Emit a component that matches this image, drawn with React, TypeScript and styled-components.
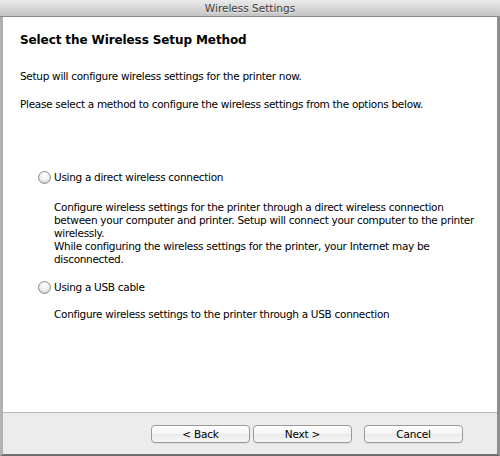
import React from "react";
import styled, { createGlobalStyle } from "styled-components";

const GlobalStyle = createGlobalStyle`
    html, body {
        margin: 0;
        padding: 0;
        background: #ffffff;
    }
    body {
        font-family: "DejaVu Sans", "Liberation Sans", sans-serif;
        -webkit-font-smoothing: antialiased;
    }
`;

const Window = styled.div`
    width: 500px;
    height: 456px;
    box-sizing: border-box;
    display: flex;
    flex-direction: column;
    border-left: 3px solid #b2b2b2;
    border-right: 3px solid #8e8e8e;
    border-bottom: 2px solid #6f6f6f;
    background: #ffffff;
`;

const TitleBar = styled.div`
    height: 16px;
    flex-shrink: 0;
    display: flex;
    align-items: center;
    justify-content: center;
    margin: 0 -3px;
    background: linear-gradient(#ebebeb, #c4c4c4);
    border-bottom: 1px solid #8a8a8a;
    font-size: 10.5px;
    color: #3a3a3a;
    text-shadow: 0 1px 0 rgba(255, 255, 255, 0.6);
`;

const Body = styled.div`
    flex: 1;
    padding: 16px 0 0 17px;
    color: #000000;
    font-size: 10.5px;
    letter-spacing: -0.3px;
    white-space: nowrap;
`;

const Heading = styled.h1`
    margin: 0 0 22px;
    font-size: 12px;
    font-weight: bold;
    letter-spacing: -0.1px;
`;

const Para = styled.p`
    margin: 0 0 14px;
    line-height: 14px;
`;

const Options = styled.div`
    display: flex;
    flex-direction: column;
    gap: 14px;
    margin-top: 59px;
    padding-left: 18px;
`;

const Option = styled.div<{ $spacing: number }>`
    display: flex;
    flex-direction: column;
    gap: ${(p) => p.$spacing}px;
`;

const RadioLabel = styled.label`
    display: flex;
    align-items: center;
    gap: 3px;
    line-height: 14px;
`;

const Radio = styled.span`
    width: 13px;
    height: 13px;
    box-sizing: border-box;
    border-radius: 50%;
    border: 1px solid #8d8d8d;
    background: radial-gradient(circle at 50% 30%, #ffffff 0%, #f1f1f1 45%, #d2d2d2 100%);
    box-shadow: inset 0 -1px 1px rgba(0, 0, 0, 0.08);
`;

const Description = styled.div`
    padding-left: 16px;
    line-height: 13px;
`;

const Footer = styled.div`
    height: 42px;
    flex-shrink: 0;
    display: flex;
    align-items: center;
    padding-left: 148px;
    background: #ececec;
    border-top: 1px solid #b8b8b8;
    box-sizing: border-box;
`;

const Button = styled.button<{ $gap?: number }>`
    width: 99px;
    height: 18px;
    margin-left: ${(p) => p.$gap ?? 0}px;
    padding: 0;
    font-family: "DejaVu Sans", "Liberation Sans", sans-serif;
    font-size: 10.5px;
    letter-spacing: -0.2px;
    color: #000000;
    border: 1px solid #9a9a9a;
    border-radius: 4px;
    background: linear-gradient(#ffffff, #f4f4f4 50%, #ebebeb 51%, #f6f6f6);
    box-shadow: 0 1px 0 rgba(0, 0, 0, 0.06);
`;

export default function App() {
    return (
        <>
            <GlobalStyle />
            <Window>
                <TitleBar>Wireless Settings</TitleBar>
                <Body>
                    <Heading>Select the Wireless Setup Method</Heading>
                    <Para>Setup will configure wireless settings for the printer now.</Para>
                    <Para>
                        Please select a method to configure the wireless settings from the options below.
                    </Para>
                    <Options>
                        <Option $spacing={17}>
                            <RadioLabel>
                                <Radio />
                                Using a direct wireless connection
                            </RadioLabel>
                            <Description>
                                Configure wireless settings for the printer through a direct wireless connection
                                <br />
                                between your computer and printer. Setup will connect your computer to the printer
                                <br />
                                wirelessly.
                                <br />
                                While configuring the wireless settings for the printer, your Internet may be
                                <br />
                                disconnected.
                            </Description>
                        </Option>
                        <Option $spacing={14}>
                            <RadioLabel>
                                <Radio />
                                Using a USB cable
                            </RadioLabel>
                            <Description>
                                Configure wireless settings to the printer through a USB connection
                            </Description>
                        </Option>
                    </Options>
                </Body>
                <Footer>
                    <Button>&lt; Back</Button>
                    <Button $gap={3}>Next &gt;</Button>
                    <Button $gap={12}>Cancel</Button>
                </Footer>
            </Window>
        </>
    );
}
